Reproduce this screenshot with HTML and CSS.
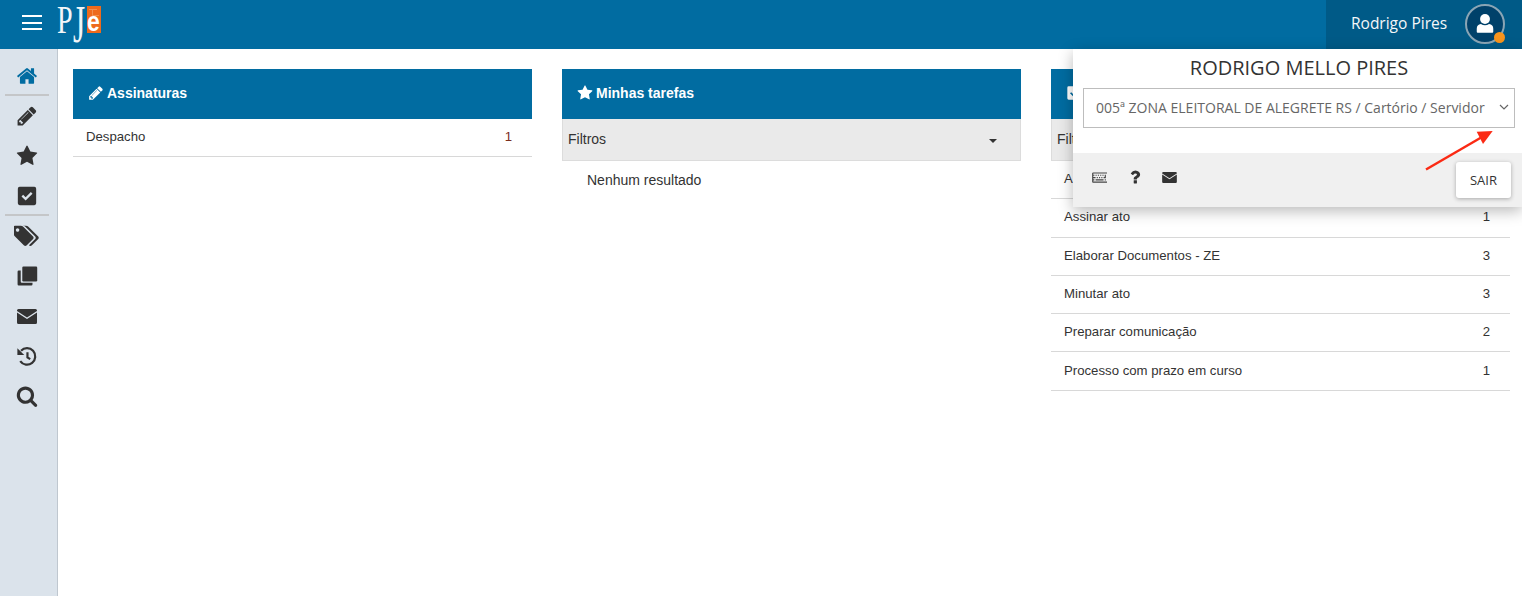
FILE: index.html
```html
<!DOCTYPE html>
<html lang="pt-BR">
<head>
<meta charset="utf-8"/>
<title>PJe</title>
<link rel="stylesheet" href="styles.css">
</head>
<body>
<svg class="defs" width="0" height="0">
  <symbol id="i-home" viewBox="0 0 1792 1792"><path d="M1472 992v480q0 26-19 45t-45 19h-384v-384h-256v384h-384q-26 0-45-19t-19-45v-480q0-1 .5-3t.5-3l575-474 575 474q1 2 1 6zm223-69l-62 74q-8 9-21 11h-3q-13 0-21-7l-692-577-692 577q-12 8-24 7-13-2-21-11l-62-74q-8-10-7-23.500t11-21.500l719-599q32-26 76-26t76 26l244 204v-195q0-14 9-23t23-9h192q14 0 23 9t9 23v408l219 182q10 8 11 21.500t-7 23.500z"/></symbol>
  <symbol id="i-pencil" viewBox="0 0 1792 1792"><path d="M491 1536l91-91-235-235-91 91v107h128v128h107zm523-928q0-22-22-22-10 0-17 7l-542 542q-7 7-7 17 0 22 22 22 10 0 17-7l542-542q7-7 7-17zm-54-192l416 416-832 832h-416v-416zm683 96q0 53-37 90l-166 166-416-416 166-165q36-38 90-38 53 0 91 38l235 234q37 39 37 91z"/></symbol>
  <symbol id="i-star" viewBox="0 0 1792 1792"><path d="M1728 647q0 22-26 48l-363 354 86 500q1 7 1 20 0 21-10.500 35.500t-30.500 14.500q-19 0-40-12l-449-236-449 236q-22 12-40 12-21 0-31.500-14.500t-10.500-35.500q0-6 2-20l86-500-364-354q-25-27-25-48 0-37 56-46l502-73 225-455q19-41 49-41t49 41l225 455 502 73q56 9 56 46z"/></symbol>
  <symbol id="i-check" viewBox="0 0 24 24"><path fill-rule="evenodd" d="M4 2h16q2 0 2 2v16q0 2-2 2H4q-2 0-2-2V4q0-2 2-2zm6.500 15l7.500-7.500-1.800-1.800-5.700 5.700-2.700-2.700-1.800 1.800z"/></symbol>
  <symbol id="i-tags" viewBox="0 0 1920 1792"><path d="M384 448q0-53-37.500-90.500t-90.500-37.500-90.500 37.500-37.500 90.500 37.500 90.500 90.500 37.500 90.500-37.500 37.500-90.500zm1067 576q0 53-37 90l-491 492q-39 37-91 37-53 0-90-37l-715-716q-38-37-64.500-101t-26.500-117v-416q0-52 38-90t90-38h416q53 0 117 26.500t102 64.500l715 714q37 39 37 91zm384 0q0 53-37 90l-491 492q-39 37-91 37-36 0-59-14t-53-45l470-470q37-37 37-90 0-52-37-91l-715-714q-38-38-102-64.500t-117-26.500h224q53 0 117 26.500t102 64.500l715 714q37 39 37 91z"/></symbol>
  <symbol id="i-clone" viewBox="0 0 1792 1792"><path d="M608 128h1024q96 0 96 96v1024q0 96-96 96h-1024q-96 0-96-96v-1024q0-96 96-96z"/><path d="M384 448v896q0 96 96 96h864v128q0 96-96 96h-1024q-96 0-96-96v-1024q0-96 96-96z"/></symbol>
  <symbol id="i-envelope" viewBox="0 0 20 15"><path d="M1.500 0h17q1.500 0 1.500 1.500v.5l-10 6.500L0 2v-.5Q0 0 1.500 0z"/><path d="M0 3.500l10 6.500 10-6.500v10q0 1.500-1.500 1.500h-17Q0 15 0 13.500z"/></symbol>
  <symbol id="i-history" viewBox="0 0 24 24"><path class="line" d="M5.500 6.200A9 9 0 1 1 4.600 17.600"/><path d="M1.500 3.500v7.500h7.500z"/><path class="line" d="M12.500 8v5.500l3 2"/></symbol>
  <symbol id="i-search" viewBox="0 0 1792 1792"><path d="M1216 832q0-185-131.500-316.500t-316.500-131.500-316.500 131.500-131.500 316.500 131.500 316.500 316.500 131.500 316.500-131.500 131.500-316.500zm512 832q0 52-38 90t-90 38q-54 0-90-38l-343-342q-179 124-399 124-143 0-273.500-55.500t-225-150-150-225-55.500-273.500 55.500-273.500 150-225 225-150 273.500-55.500 273.500 55.500 225 150 150 225 55.500 273.500q0 220-124 399l343 343q37 37 37 90z"/></symbol>
  <symbol id="i-question" viewBox="0 0 1792 1792"><path d="M1088 1256v240q0 16-12 28t-28 12h-240q-16 0-28-12t-12-28v-240q0-16 12-28t28-12h240q16 0 28 12t12 28zm316-600q0 54-15.500 101t-35 76.500-55 59.500-57.500 43.500-61 35.500q-41 23-68.500 65t-27.500 67q0 17-12 32.500t-28 15.500h-240q-15 0-25.500-18.500t-10.500-37.500v-45q0-83 65-156.500t143-108.500q59-27 84-56t25-76q0-42-46.500-74t-107.500-32q-65 0-108 29-35 25-107 115-13 16-31 16-12 0-25-8l-164-125q-13-10-15.500-25t5.500-28q160-266 464-266 80 0 161 31t146 83 106 127.500 41 158.500z"/></symbol>
  <symbol id="i-keyboard" viewBox="0 0 1792 1792"><path d="M384 1168v96q0 16-16 16h-96q-16 0-16-16v-96q0-16 16-16h96q16 0 16 16zm128-256v96q0 16-16 16h-224q-16 0-16-16v-96q0-16 16-16h224q16 0 16 16zm-128-256v96q0 16-16 16h-96q-16 0-16-16v-96q0-16 16-16h96q16 0 16 16zm1024 512v96q0 16-16 16h-864q-16 0-16-16v-96q0-16 16-16h864q16 0 16 16zm-640-256v96q0 16-16 16h-96q-16 0-16-16v-96q0-16 16-16h96q16 0 16 16zm-128-256v96q0 16-16 16h-96q-16 0-16-16v-96q0-16 16-16h96q16 0 16 16zm384 256v96q0 16-16 16h-96q-16 0-16-16v-96q0-16 16-16h96q16 0 16 16zm-128-256v96q0 16-16 16h-96q-16 0-16-16v-96q0-16 16-16h96q16 0 16 16zm384 256v96q0 16-16 16h-96q-16 0-16-16v-96q0-16 16-16h96q16 0 16 16zm384 256v96q0 16-16 16h-96q-16 0-16-16v-96q0-16 16-16h96q16 0 16 16zm-512-512v96q0 16-16 16h-96q-16 0-16-16v-96q0-16 16-16h96q16 0 16 16zm256 0v96q0 16-16 16h-96q-16 0-16-16v-96q0-16 16-16h96q16 0 16 16zm256 0v352q0 16-16 16h-224q-16 0-16-16v-96q0-16 16-16h112v-240q0-16 16-16h96q16 0 16 16zm128 752v-896h-1536v896h1536zm128-896v896q0 53-37.500 90.500t-90.500 37.500h-1536q-53 0-90.500-37.500t-37.500-90.500v-896q0-53 37.500-90.500t90.500-37.500h1536q53 0 90.500 37.500t37.500 90.500z"/></symbol>
</svg>

<div id="topbar">
  <div class="brand">
    <button class="burger" aria-label="Menu"><span></span><span></span><span></span></button>
    <div class="logo"><span class="logo-p">P</span><span class="logo-j">J</span><span class="logo-e"><b>e</b></span></div>
  </div>
  <div class="userbox">
    <span class="username">Rodrigo Pires</span>
    <div class="avatar">
      <svg viewBox="0 0 24 24"><circle cx="12" cy="7.600" r="5.400"/><path d="M3 21.500v-3.300q0-4.700 4.600-5.200 2 1.500 4.400 1.500t4.400-1.500q4.600.5 4.600 5.200v3.300q0 1-1 1h-16q-1 0-1-1z"/></svg>
      <span class="status-dot"></span>
    </div>
  </div>
</div>

<div id="layout">
  <nav id="sidebar">
    <a class="navitem sep home"><svg><use href="#i-home"/></svg></a>
    <a class="navitem"><svg><use href="#i-pencil"/></svg></a>
    <a class="navitem"><svg><use href="#i-star"/></svg></a>
    <a class="navitem sep"><svg><use href="#i-check"/></svg></a>
    <a class="navitem"><svg class="wide"><use href="#i-tags"/></svg></a>
    <a class="navitem"><svg><use href="#i-clone"/></svg></a>
    <a class="navitem"><svg class="mail"><use href="#i-envelope"/></svg></a>
    <a class="navitem"><svg><use href="#i-history"/></svg></a>
    <a class="navitem"><svg><use href="#i-search"/></svg></a>
  </nav>

  <main id="panels">
    <section class="panel">
      <h2 class="panel-title"><svg><use href="#i-pencil"/></svg>Assinaturas</h2>
      <ul class="rows">
        <li class="row"><span>Despacho</span><span class="count alert">1</span></li>
      </ul>
    </section>

    <section class="panel">
      <h2 class="panel-title"><svg><use href="#i-star"/></svg>Minhas tarefas</h2>
      <div class="filter"><span>Filtros</span><i class="caret"></i></div>
      <p class="empty">Nenhum resultado</p>
    </section>

    <section class="panel">
      <h2 class="panel-title"><svg><use href="#i-check"/></svg>Etiquetas</h2>
      <div class="filter"><span>Filtros</span><i class="caret"></i></div>
      <ul class="rows">
        <li class="row"><span>Analisar</span><span class="count">1</span></li>
        <li class="row"><span>Assinar ato</span><span class="count">1</span></li>
        <li class="row"><span>Elaborar Documentos - ZE</span><span class="count">3</span></li>
        <li class="row"><span>Minutar ato</span><span class="count">3</span></li>
        <li class="row"><span>Preparar comunicação</span><span class="count">2</span></li>
        <li class="row"><span>Processo com prazo em curso</span><span class="count">1</span></li>
      </ul>
    </section>
  </main>
</div>

<div id="usermenu">
  <div class="menu-top">
    <div class="fullname">RODRIGO MELLO PIRES</div>
    <div class="profile">
      <span>005ª ZONA ELEITORAL DE ALEGRETE RS / Cartório / Servidor</span>
      <svg viewBox="0 0 10 6"><path d="M1 1l4 4 4-4"/></svg>
    </div>
  </div>
  <div class="menu-foot">
    <div class="tools">
      <svg class="kbd"><use href="#i-keyboard"/></svg>
      <svg class="help"><use href="#i-question"/></svg>
      <svg class="mail"><use href="#i-envelope"/></svg>
    </div>
    <button class="logout">SAIR</button>
  </div>
</div>

<svg id="arrow" viewBox="0 0 72 46"><path d="M1 41.500L57 9" /><polygon points="67.700,3 51.700,3.700 58,16"/></svg>
</body>
</html>
```

FILE: styles.css
```css
html, body {
    margin:0;
    padding:0;
    height:100%;
    overflow:hidden;
}
body {
    display:flex;
    flex-direction:column;
    font-family:"Liberation Sans", sans-serif;
    font-size:13.200px;
    color:#333;
    background:#fff;
}
.defs {
    position:absolute;
}
.line {
    fill:none;
    stroke:currentColor;
    stroke-width:2.400;
}

/* top bar */
#topbar {
    display:flex;
    justify-content:space-between;
    flex:none;
    height:49px;
    background:#016ca1;
}
.brand {
    display:flex;
    align-items:flex-start;
}
.burger {
    display:flex;
    flex-direction:column;
    justify-content:space-between;
    width:20px;
    height:15px;
    margin:15px 0 0 22px;
    padding:0;
    border:0;
    background:none;
}
.burger span {
    display:block;
    height:2px;
    background:#fff;
}
.logo {
    display:flex;
    margin-left:15px;
    height:49px;
    font-family:"Liberation Serif", serif;
    font-size:39px;
    line-height:46px;
    color:#f2f6f8;
}
.logo-p, .logo-j {
    display:block;
    flex:none;
    height:46px;
    margin-top:-3px;
    transform-origin:0 10px;
}
.logo-p {
    width:16px;
    transform:scaleX(.72);
}
.logo-j {
    width:14px;
    transform:scale(.8, 1.35);
}
.logo-e {
    display:block;
    flex:none;
    width:14px;
    height:27px;
    margin-top:6px;
    background:
        linear-gradient(#f28f50,#f28f50) 2px 3px/8px 1px no-repeat,
        linear-gradient(#f28f50,#f28f50) 5px 3px/1px 7px no-repeat,
        linear-gradient(#f28f50,#f28f50) 5px 9px/7px 1px no-repeat,
        #ee6a1c;
    font-family:"Liberation Sans", sans-serif;
    font-size:27px;
    line-height:33px;
    color:#fff;
}
.logo-e b {
    display:block;
    transform:scaleX(.85);
    transform-origin:0 0;
}
.userbox {
    display:flex;
    align-items:center;
    width:196px;
    box-sizing:border-box;
    padding:0 0 1px 25px;
    background:#005a87;
}
.username {
    font-family:"Open Sans", sans-serif;
    font-size:15.500px;
    line-height:20px;
    padding-bottom:3px;
    color:#f4f7f9;
    margin-right:18px;
    white-space:nowrap;
}
.avatar {
    position:relative;
    box-sizing:border-box;
    width:40px;
    height:40px;
    border:2px solid #8aa5b5;
    border-radius:50%;
    background:#00416a;
}
.avatar svg {
    display:block;
    width:22px;
    height:22px;
    margin:6px 7px;
    fill:#fff;
}
.status-dot {
    position:absolute;
    right:-2px;
    bottom:-1px;
    width:11px;
    height:11px;
    border-radius:50%;
    background:#f7941d;
}

/* left menu */
#layout {
    display:flex;
    flex:1;
    min-height:0;
}
#sidebar {
    flex:none;
    box-sizing:border-box;
    width:58px;
    padding:7px 8px 0 5px;
    background:#dbe3eb;
    border-right:1px solid #bfc7cf;
}
.navitem {
    display:flex;
    align-items:center;
    justify-content:center;
    box-sizing:border-box;
    height:40px;
    fill:#333;
    color:#333;
}
.navitem svg {
    width:22px;
    height:24px;
}
.navitem svg.wide {
    width:26px;
}
.navitem svg.mail {
    width:20px;
    height:15px;
}
.navitem.sep {
    border-bottom:2px solid #c4c6c8;
    padding-top:1px;
}
.navitem.home {
    fill:#016ca1;
}

/* panels */
#panels {
    flex:1;
    display:grid;
    grid-template-columns:repeat(3, 459px);
    column-gap:30px;
    align-items:start;
    padding:20px 0 0 15px;
}
.panel-title {
    display:flex;
    align-items:center;
    box-sizing:border-box;
    height:50px;
    margin:0;
    padding:0 0 2px 15px;
    background:#016ca1;
    color:#fff;
    font-size:14px;
    font-weight:bold;
    fill:#fff;
}
.panel-title svg {
    width:16px;
    height:16px;
    margin-right:3px;
}
.rows {
    list-style:none;
    margin:0;
    padding:0;
}
.row {
    display:flex;
    justify-content:space-between;
    align-items:center;
    box-sizing:border-box;
    height:38.300px;
    padding:0 20px 2px 13px;
    border-bottom:1px solid #d8d8d8;
}
.count.alert {
    color:#7a2e1e;
}
.filter {
    display:flex;
    justify-content:space-between;
    align-items:center;
    box-sizing:border-box;
    height:42px;
    padding:0 23px 2px 5px;
    background:#eaeaea;
    border:1px solid #dcdcdc;
    border-top:0;
    font-size:14px;
}
.caret {
    width:0;
    height:0;
    margin-top:5px;
    border-top:4px solid #333;
    border-left:4px solid transparent;
    border-right:4px solid transparent;
}
.empty {
    margin:0;
    padding:11px 0 0 25px;
    font-size:14px;
}

/* user dropdown */
#usermenu {
    position:absolute;
    top:49px;
    left:1073px;
    width:449px;
    font-family:"Open Sans", sans-serif;
    background:#fff;
    box-shadow:0 4px 14px rgba(0,0,0,.28);
}
.menu-top {
    height:104px;
    box-sizing:border-box;
    padding:6px 7px 0 10px;
}
.fullname {
    font-size:20px;
    line-height:26px;
    text-align:center;
    color:#333;
}
.profile {
    display:flex;
    justify-content:space-between;
    align-items:center;
    box-sizing:border-box;
    height:40px;
    margin-top:7px;
    padding:0 5px 2px 12px;
    border:1px solid #bdbdbd;
    font-size:14px;
    color:#666;
    white-space:nowrap;
}
.profile svg {
    width:10px;
    height:6px;
    fill:none;
    stroke:#666;
    stroke-width:1.200;
}
.menu-foot {
    display:flex;
    justify-content:space-between;
    height:54px;
    box-sizing:border-box;
    padding:9px 11px 0 18px;
    background:#f0f0f0;
}
.tools {
    display:flex;
    align-items:center;
    height:30px;
    fill:#333;
}
.tools .kbd {
    width:16px;
    height:16px;
    margin-right:19px;
    opacity:.9;
}
.tools .help {
    width:18px;
    height:18px;
    margin-right:18px;
}
.tools .mail {
    width:15px;
    height:11px;
}
.logout {
    width:55px;
    height:36px;
    padding:0;
    border:0;
    border-radius:3px;
    background:#fff;
    color:#333;
    font-family:"Open Sans", sans-serif;
    font-size:13px;
    box-shadow:0 1px 4px rgba(0,0,0,.3);
}

/* red annotation over the screenshot */
#arrow {
    position:absolute;
    top:128px;
    left:1425px;
    width:72px;
    height:46px;
    fill:#fb2a14;
}
#arrow path {
    fill:none;
    stroke:#fb2a14;
    stroke-width:2.500;
}
```
